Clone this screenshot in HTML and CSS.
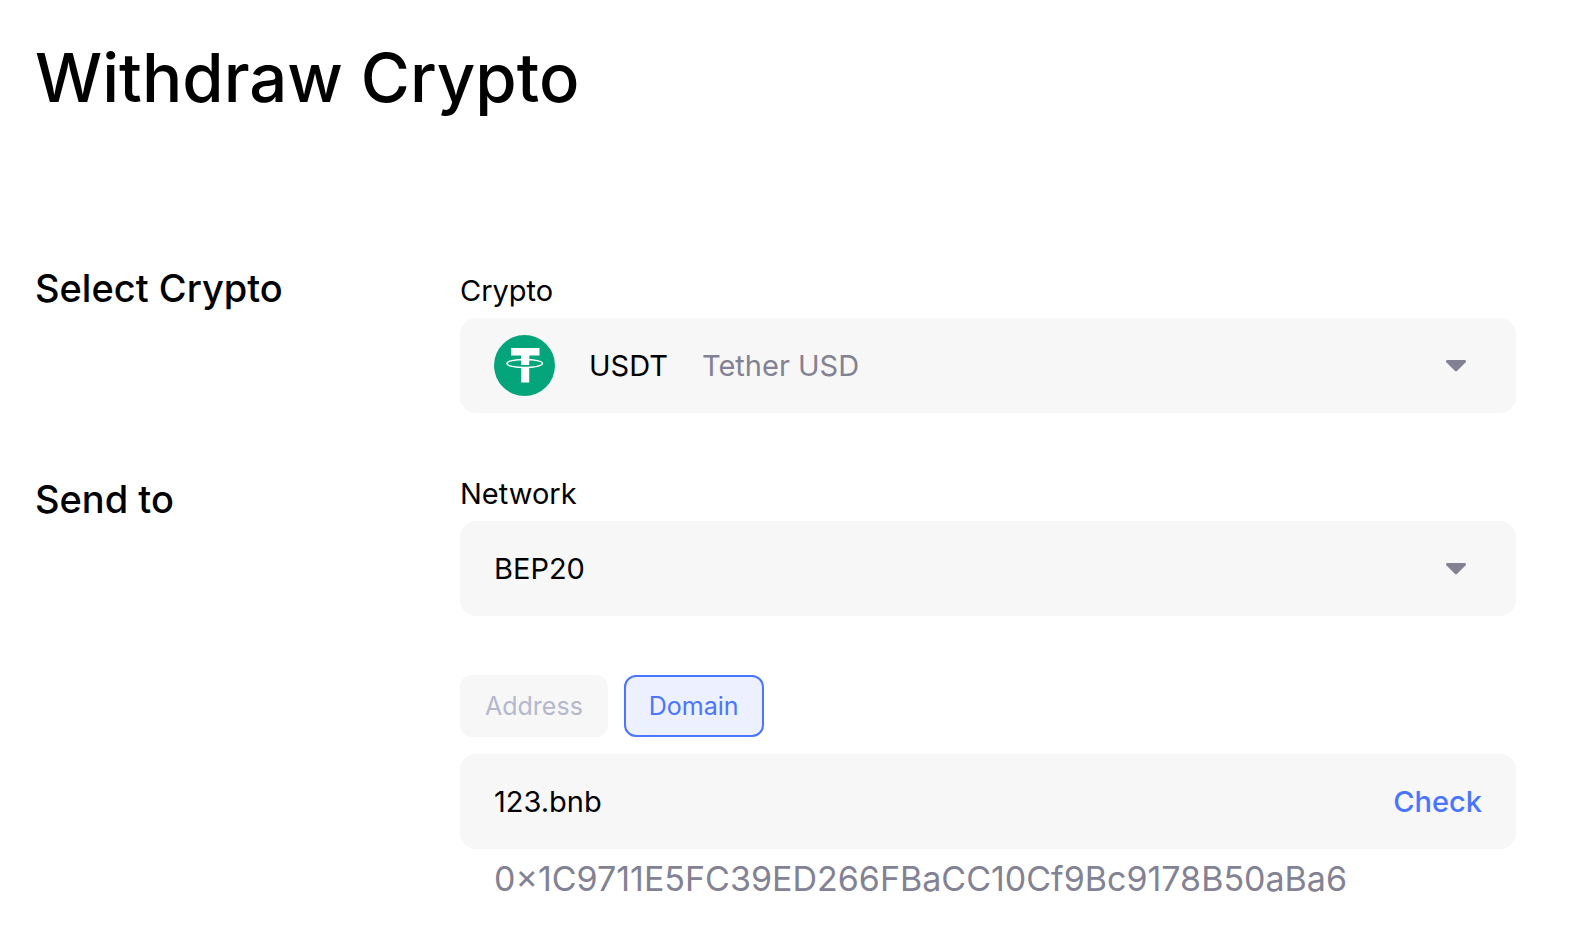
FILE: index.html
```html
<!DOCTYPE html>
<html lang="en">
<head>
    <meta charset="UTF-8">
    <meta name="viewport" content="width=device-width, initial-scale=1.0">
    <title>Withdraw Crypto</title>
    <link rel="stylesheet" href="styles.css">
</head>
<body>
    <main class="withdraw">
        <h1>Withdraw Crypto</h1>

        <form class="withdraw-form">
            <section class="form-row">
                <h2>Select Crypto</h2>
                <div class="form-fields">
                    <label class="field-label" for="crypto">Crypto</label>
                    <div class="field">
                        <svg class="coin-icon" viewBox="0 0 61 61" aria-hidden="true">
                            <circle cx="30.5" cy="30.5" r="30.5" fill="#05a57b"/>
                            <path d="M17 13h28.500v7.500H35.200V27h-8V20.500H17z" fill="#fff"/>
                            <ellipse cx="30.700" cy="28.500" rx="17.800" ry="4" fill="none" stroke="#fff" stroke-width="1.400"/>
                            <path d="M27.200 20h8v10h-8zM27.200 32h8v15.500h-8z" fill="#fff"/>
                        </svg>
                        <select class="field-select" id="crypto">
                            <option selected>USDT</option>
                        </select>
                        <span class="coin-name">Tether USD</span>
                        <svg class="arrow" viewBox="0 0 20 12" aria-hidden="true">
                            <path d="M1.500 0h17c1.400 0 2 1.500 1 2.500l-8.300 8.300c-.7.7-1.700.7-2.400 0L.5 2.500C-.5 1.500.1 0 1.500 0z" fill="#828294"/>
                        </svg>
                    </div>
                </div>
            </section>

            <section class="form-row send-to">
                <h2>Send to</h2>
                <div class="form-fields">
                    <label class="field-label" for="network">Network</label>
                    <div class="field">
                        <select class="field-select wide" id="network">
                            <option selected>BEP20</option>
                        </select>
                        <svg class="arrow" viewBox="0 0 20 12" aria-hidden="true">
                            <path d="M1.500 0h17c1.400 0 2 1.500 1 2.500l-8.300 8.300c-.7.7-1.700.7-2.400 0L.5 2.500C-.5 1.500.1 0 1.500 0z" fill="#828294"/>
                        </svg>
                    </div>

                    <div class="tabs">
                        <button type="button" class="tab">Address</button>
                        <button type="button" class="tab active">Domain</button>
                    </div>

                    <div class="field">
                        <input class="field-input" type="text" value="123.bnb" aria-label="Domain">
                        <button type="button" class="check-btn">Check</button>
                    </div>
                    <p class="resolved">0×1C9711E5FC39ED266FBaCC10Cf9Bc9178B50aBa6</p>
                </div>
            </section>
        </form>
    </main>
</body>
</html>
```
FILE: styles.css
```css
* {
    box-sizing: border-box;
}
body {
    font-family: Inter, sans-serif;
    background-color: #fff;
    color: #000;
    margin: 0;
}
button, input, select {
    font-family: inherit;
    color: inherit;
}
.withdraw {
    padding: 38px 68px 24px 35px;
}
h1 {
    font-size: 67px;
    font-weight: 500;
    line-height: 80px;
    margin: 0 0 152px;
}
.withdraw-form {
    display: flex;
    flex-direction: column;
    gap: 60px;
}
.form-row {
    display: grid;
    grid-template-columns: 425px 1fr;
}
h2 {
    font-size: 38px;
    font-weight: 500;
    line-height: 36px;
    margin: 0;
}
.send-to h2 {
    margin-top: 8px;
}
.field-label {
    display: block;
    font-size: 29px;
    line-height: 42px;
    margin-bottom: 6px;
}
.field {
    display: flex;
    align-items: center;
    height: 95px;
    padding: 0 34px;
    border-radius: 16px;
    background-color: #f7f7f7;
    font-size: 29px;
}
.coin-icon {
    width: 61px;
    height: 61px;
    margin-right: 34px;
}
.field-select {
    appearance: none;
    border: none;
    padding: 0;
    background: none;
    font-size: 29px;
    cursor: pointer;
}
.field-select.wide {
    flex: 1;
}
.coin-name {
    margin-left: 34px;
    color: #828294;
}
.arrow {
    width: 20px;
    height: 12px;
    margin-left: auto;
    margin-right: 16px;
}
.tabs {
    display: flex;
    gap: 16px;
    margin: 59px 0 17px;
}
.tab {
    height: 62px;
    padding: 0 23px;
    border: 2px solid #f7f7f7;
    border-radius: 12px;
    background-color: #f7f7f7;
    color: #b5b8cc;
    font-size: 25px;
    cursor: pointer;
}
.tab.active {
    border-color: #4a76ff;
    background-color: #ecf0ff;
    color: #4a76ff;
}
.field-input {
    flex: 1;
    min-width: 0;
    border: none;
    padding: 0;
    background: none;
    font-size: 29px;
}
.check-btn {
    border: none;
    padding: 0;
    background: none;
    color: #4a76ff;
    font-size: 29px;
    font-weight: 500;
    cursor: pointer;
}
.resolved {
    margin: 8px 34px 0;
    color: #828294;
    font-size: 34px;
    line-height: 44px;
    overflow-wrap: anywhere;
}
```
